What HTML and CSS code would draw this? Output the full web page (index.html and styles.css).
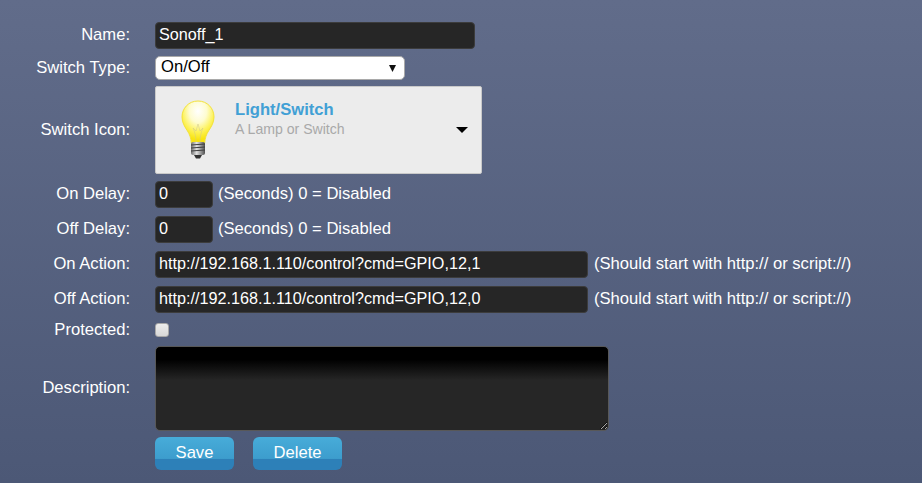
FILE: index.html
```html
<!DOCTYPE html>
<html lang="en">
<head>
    <meta charset="UTF-8">
    <title>Edit Device</title>
    <link rel="stylesheet" href="styles.css">
</head>
<body>
    <form class="device-form">
        <!-- Name -->
        <div class="row row-name">
            <label for="name">Name:</label>
            <input class="text-input input-name" type="text" id="name" value="Sonoff_1">
        </div>

        <!-- Switch type -->
        <div class="row row-type">
            <label for="type">Switch Type:</label>
            <select class="type-select" id="type">
                <option>On/Off</option>
            </select>
        </div>

        <!-- Switch icon -->
        <div class="row row-icon">
            <label>Switch Icon:</label>
            <div class="icon-select">
                <svg class="bulb" width="34" height="60" viewBox="0 0 34 60">
                    <defs>
                        <radialGradient id="glass" cx="50%" cy="24%" r="68%">
                            <stop offset="0" stop-color="#ffffff"/>
                            <stop offset="0.4" stop-color="#fefcd0"/>
                            <stop offset="0.72" stop-color="#fdf25a"/>
                            <stop offset="1" stop-color="#f8e40f"/>
                        </radialGradient>
                        <linearGradient id="screw" x1="0" x2="1" y1="0" y2="0">
                            <stop offset="0" stop-color="#6d6d6d"/>
                            <stop offset="0.4" stop-color="#e2e2e2"/>
                            <stop offset="1" stop-color="#4f4f4f"/>
                        </linearGradient>
                    </defs>
                    <path d="M17 1C7.500 1 1 8.500 1 17c0 6 3 10 5.500 14 2 3.200 3.500 7 3.800 12h13.400c.3-5 1.800-8.800 3.800-12C30 27 33 23 33 17 33 8.500 26.500 1 17 1z" fill="url(#glass)" stroke="#f3e23c" stroke-width="1"/>
                    <path d="M15 43c0-6-1-11-3-15l3 3 2-7 2 7 3-3c-2 4-3 9-3 15" fill="none" stroke="#cfc68c" stroke-width="0.5"/>
                    <rect x="10" y="42" width="14" height="13" rx="2" fill="url(#screw)"/>
                    <path d="M10 45l14-1M10 48l14-1M10 51l14-1" stroke="#3f3f3f" stroke-width="1"/>
                    <path d="M13 55h8l-2 3.500h-4z" fill="#333"/>
                </svg>
                <div class="icon-text">
                    <div class="icon-title">Light/Switch</div>
                    <div class="icon-desc">A Lamp or Switch</div>
                </div>
                <span class="icon-arrow"></span>
            </div>
        </div>

        <!-- Delays -->
        <div class="row">
            <label for="onDelay">On Delay:</label>
            <input class="text-input input-delay" type="text" id="onDelay" value="0">
            <span class="hint">(Seconds) 0 = Disabled</span>
        </div>
        <div class="row">
            <label for="offDelay">Off Delay:</label>
            <input class="text-input input-delay" type="text" id="offDelay" value="0">
            <span class="hint">(Seconds) 0 = Disabled</span>
        </div>

        <!-- Actions -->
        <div class="row">
            <label for="onAction">On Action:</label>
            <input class="text-input input-action" type="text" id="onAction" value="http://192.168.1.110/control?cmd=GPIO,12,1">
            <span class="hint">(Should start with http:// or script://)</span>
        </div>
        <div class="row row-last-action">
            <label for="offAction">Off Action:</label>
            <input class="text-input input-action" type="text" id="offAction" value="http://192.168.1.110/control?cmd=GPIO,12,0">
            <span class="hint">(Should start with http:// or script://)</span>
        </div>

        <!-- Protected -->
        <div class="row row-protected">
            <label for="protected">Protected:</label>
            <input class="check" type="checkbox" id="protected">
        </div>

        <!-- Description -->
        <div class="row row-description">
            <label for="description">Description:</label>
            <textarea class="description" id="description"></textarea>
        </div>

        <!-- Buttons -->
        <div class="buttons">
            <a class="btn btn-save">Save</a>
            <a class="btn btn-delete">Delete</a>
        </div>
    </form>
</body>
</html>
```

FILE: styles.css
```css
* {
    margin: 0;
    padding: 0;
    box-sizing: border-box;
}
html, body {
    height: 100%;
}
body {
    font-family: "Liberation Sans", Arial, sans-serif;
    font-size: 16.6px;
    color: #fff;
    background: linear-gradient(#616c8a, #4c5876);
    overflow: hidden;
}
.device-form {
    padding-top: 22px;
}
.row {
    display: flex;
    align-items: center;
    margin-bottom: 8px;
}
.row label {
    width: 130px;
    margin-right: 25px;
    padding-bottom: 2px;
    text-align: right;
    flex-shrink: 0;
}
.row-name {
    margin-bottom: 7px;
}
.row-type {
    margin-bottom: 6px;
}
.row-type label,
.row-icon label {
    padding-bottom: 0;
}
.row-icon {
    margin-bottom: 7px;
}
.row-last-action {
    margin-bottom: 7px;
}
.row-protected {
    align-items: flex-start;
    margin-bottom: 4px;
}
.row-description {
    margin-bottom: 6px;
}
.text-input {
    height: 27px;
    padding: 0 3px 2px;
    font-family: inherit;
    font-size: 16.2px;
    color: #fff;
    background: #262626;
    border: 1px solid #3c3c3c;
    border-radius: 4px;
    outline: none;
}
.input-name {
    width: 320px;
}
.input-delay {
    width: 58px;
}
.input-action {
    width: 433px;
}
.hint {
    margin-left: 6px;
    padding-bottom: 2px;
}
.input-delay + .hint {
    margin-left: 5px;
}
.type-select {
    appearance: none;
    width: 250px;
    height: 24px;
    padding: 0 5px 3px;
    font-family: inherit;
    font-size: 16.6px;
    color: #000;
    background: #fff url("data:image/svg+xml,%3Csvg xmlns='http://www.w3.org/2000/svg' width='7' height='7'%3E%3Cpath d='M0 0h7L3.500 7z' fill='%23111'/%3E%3C/svg%3E") no-repeat 233px 8px;
    border: 1px solid #a9a9a9;
    border-radius: 5px;
}
.icon-select {
    display: flex;
    align-items: center;
    position: relative;
    width: 327px;
    height: 88px;
    padding-left: 25px;
    background: #ececec;
    border: 1px solid #c9c9c9;
    border-radius: 2px;
}
.bulb {
    flex-shrink: 0;
}
.icon-text {
    margin-left: 20px;
    margin-top: -23px;
}
.icon-title {
    font-size: 16.6px;
    font-weight: bold;
    line-height: 20px;
    color: #41a0d5;
}
.icon-desc {
    font-size: 14.1px;
    line-height: 18px;
    color: #a9a9a9;
}
.icon-arrow {
    position: absolute;
    right: 13px;
    top: 40px;
    border-top: 6px solid #000;
    border-left: 6px solid transparent;
    border-right: 6px solid transparent;
}
.check {
    appearance: none;
    width: 14px;
    height: 14px;
    margin-top: 3px;
    background: linear-gradient(#ececec, #d8d8d8);
    border: 1px solid #a8a8a8;
    border-radius: 3px;
}
.description {
    width: 454px;
    height: 85px;
    color: #fff;
    font-family: inherit;
    font-size: 16px;
    background: linear-gradient(#000 0, #000 15%, #262626 40%, #262626 100%);
    border: 1px solid #585858;
    border-radius: 5px;
    outline: none;
}
.buttons {
    display: flex;
    gap: 19px;
    margin-left: 155px;
}
.btn {
    display: block;
    height: 33px;
    line-height: 32px;
    text-align: center;
    color: #fff;
    background: linear-gradient(#47acd9 0, #3d9dcd 65%, #2d80b8 68%, #2d80b8 100%);
    border-radius: 6px;
    cursor: pointer;
}
.btn-save {
    width: 79px;
}
.btn-delete {
    width: 89px;
}
```
